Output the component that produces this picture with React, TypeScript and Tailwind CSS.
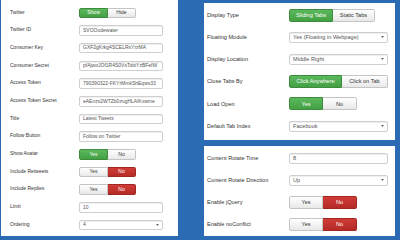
import React from "react";

type Tone = "green" | "red" | "plain";

const toneClass: Record<Tone, string> = {
  green: "bg-gradient-to-b from-[#5cb85c] to-[#43a043] border-[#3d8b3d] text-white",
  red: "bg-gradient-to-b from-[#cf3b36] to-[#b52b27] border-[#a02622] text-white",
  plain: "bg-gradient-to-b from-[#ffffff] to-[#e8e8e8] border-[#c4c4c4] text-[#333]",
};

function Toggle({
  items,
  h,
  text,
}: {
  items: { label: string; tone: Tone; w: number }[];
  h: string;
  text: string;
}) {
  return (
    <div className={`flex ${h}`}>
      {items.map((it, i) => (
        <div
          key={it.label}
          style={{ width: it.w }}
          className={`flex items-center justify-center border ${text} ${toneClass[it.tone]} ${
            i === 0 ? "rounded-l-[2px]" : "rounded-r-[2px] border-l-0"
          }`}
        >
          {it.label}
        </div>
      ))}
    </div>
  );
}

function Field({ value, w, h, text, select }: { value: string; w: string; h: string; text: string; select?: boolean }) {
  return (
    <div
      className={`flex items-center ${w} ${h} ${text} border border-[#cfcfcf] rounded-[2px] bg-white shadow-[inset_0_1px_1px_rgba(0,0,0,0.07)] pl-[3px] pr-[3px] text-[#555] overflow-hidden whitespace-nowrap`}
    >
      <span className="flex-1 overflow-hidden">{value}</span>
      {select && (
        <svg width="3" height="2" viewBox="0 0 3 2" className="ml-1 shrink-0">
          <path d="M0 0h3L1.5 2z" fill="#666" />
        </svg>
      )}
    </div>
  );
}

type Row = { label: string; kind: "input" | "select" | "toggle"; value?: string; items?: { label: string; tone: Tone; w: number }[] };

const leftRows: Row[] = [
  { label: "Twitter", kind: "toggle", items: [{ label: "Show", tone: "green", w: 29 }, { label: "Hide", tone: "plain", w: 28 }] },
  { label: "Twitter ID", kind: "input", value: "SVOOudewater" },
  { label: "Consumer Key", kind: "input", value: "GXF2gKrkg4SCELRsYrzMA" },
  { label: "Consumer Secret", kind: "input", value: "pfAjwoJOf1R4S0VsTobiYzBFefW" },
  { label: "Access Token", kind: "input", value: "790390322-FKYrMmkShEqws33" },
  { label: "Access Token Secret", kind: "input", value: "eAEnzs2WTZb0zugHLAlKxwme" },
  { label: "Title", kind: "input", value: "Latest Tweets" },
  { label: "Follow Button", kind: "input", value: "Follow on Twitter" },
  { label: "Show Avatar", kind: "toggle", items: [{ label: "Yes", tone: "green", w: 29 }, { label: "No", tone: "plain", w: 28 }] },
  { label: "Include Retweets", kind: "toggle", items: [{ label: "Yes", tone: "plain", w: 29 }, { label: "No", tone: "red", w: 28 }] },
  { label: "Include Replies", kind: "toggle", items: [{ label: "Yes", tone: "plain", w: 29 }, { label: "No", tone: "red", w: 28 }] },
  { label: "Limit", kind: "input", value: "10" },
  { label: "Ordering", kind: "select", value: "4" },
];

const rightTop: Row[] = [
  { label: "Display Type", kind: "toggle", items: [{ label: "Sliding Tabs", tone: "green", w: 44 }, { label: "Static Tabs", tone: "plain", w: 42 }] },
  { label: "Floating Module", kind: "select", value: "Yes (Floating in Webpage)" },
  { label: "Display Location", kind: "select", value: "Middle Right" },
  { label: "Close Tabs By", kind: "toggle", items: [{ label: "Click Anywhere", tone: "green", w: 53 }, { label: "Click on Tab", tone: "plain", w: 46 }] },
  { label: "Load Open", kind: "toggle", items: [{ label: "Yes", tone: "green", w: 34 }, { label: "No", tone: "plain", w: 34 }] },
  { label: "Default Tab Index", kind: "select", value: "Facebook" },
];

const rightBottom: Row[] = [
  { label: "Content Rotate Time", kind: "input", value: "8" },
  { label: "Content Rotate Direction", kind: "select", value: "Up" },
  { label: "Enable jQuery", kind: "toggle", items: [{ label: "Yes", tone: "plain", w: 34 }, { label: "No", tone: "red", w: 34 }] },
  { label: "Enable noConflict", kind: "toggle", items: [{ label: "Yes", tone: "plain", w: 34 }, { label: "No", tone: "red", w: 34 }] },
];

function RightRows({ rows }: { rows: Row[] }) {
  return (
    <>
      {rows.map((r) => (
        <div key={r.label} className="flex items-center h-[22.2px]">
          <div className="w-[82px] text-[5.6px] text-[#333]">{r.label}</div>
          {r.kind === "toggle" ? (
            <Toggle items={r.items!} h="h-[13px]" text="text-[5.6px]" />
          ) : (
            <Field value={r.value!} w="w-[99px]" h="h-[11px]" text="text-[5.6px]" select={r.kind === "select"} />
          )}
        </div>
      ))}
    </>
  );
}

export default function App() {
  return (
    <div className="w-[400px] h-[240px] bg-[#2b6bb3] flex font-['Liberation_Sans',Arial,sans-serif] overflow-hidden">
      <div className="ml-[1px] w-[177px] h-[236px] bg-white pt-[4px] pl-[9px]">
        {leftRows.map((r) => (
          <div key={r.label} className="flex items-center h-[17.7px]">
            <div className="w-[69px] text-[5px] text-[#333] -mt-[1px]">{r.label}</div>
            {r.kind === "toggle" ? (
              <Toggle items={r.items!} h="h-[10.5px]" text="text-[5px]" />
            ) : (
              <Field value={r.value!} w="w-[84px]" h="h-[10.5px]" text="text-[5px]" select={r.kind === "select"} />
            )}
          </div>
        ))}
      </div>
      <div className="ml-[26px] w-[191px] mt-[3px] flex flex-col gap-[6px]">
        <div className="bg-white h-[137px] pt-[1px] pl-[3px]">
          <RightRows rows={rightTop} />
        </div>
        <div className="bg-white h-[90px] pt-[1px] pl-[3px]">
          <RightRows rows={rightBottom} />
        </div>
      </div>
    </div>
  );
}
